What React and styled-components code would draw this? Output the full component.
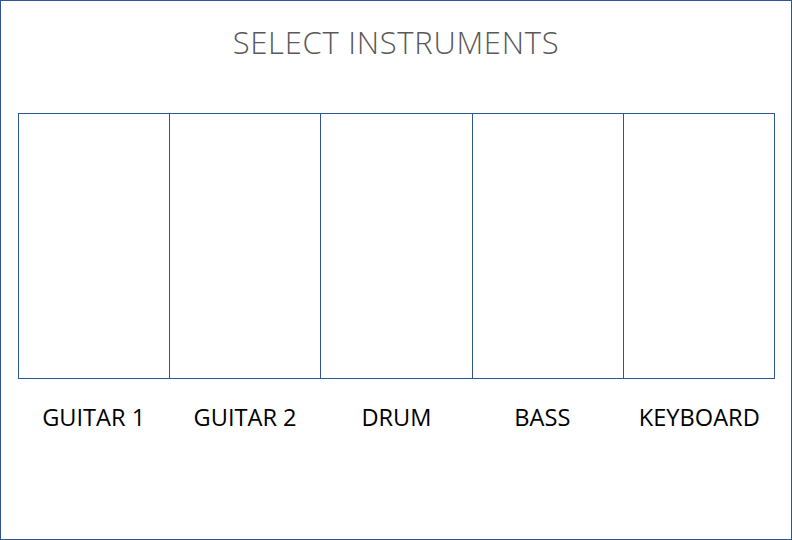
import React from "react";
import styled, { createGlobalStyle } from "styled-components";

const Global = createGlobalStyle`
  html, body { margin: 0; padding: 0; background: #fff; }
  body { font-family: "Open Sans", "Noto Sans", sans-serif; }
`;

const Frame = styled.div`
  box-sizing: border-box;
  width: 792px;
  height: 540px;
  border: 1px solid #2f5597;
  display: flex;
  flex-direction: column;
  align-items: flex-start;
  padding: 0 17px;
`;

const Title = styled.h1`
  align-self: stretch;
  text-align: center;
  margin: 20px 0 0 0;
  font-family: "Open Sans", sans-serif;
  font-weight: 300;
  font-size: 31px;
  line-height: 42px;
  color: #595959;
  letter-spacing: 0.7px;
`;

const Grid = styled.div`
  box-sizing: border-box;
  margin-top: 50px;
  width: 757px;
  border-left: 1px solid #2f5597;
  display: grid;
  grid-template-columns: repeat(5, 1fr);
`;

const Cell = styled.div`
  box-sizing: border-box;
  height: 266px;
  border: 1px solid #2f5597;
  border-left: none;
`;

const Labels = styled.div`
  width: 757px;
  display: grid;
  grid-template-columns: repeat(5, 1fr);
  margin-top: 22px;
`;

const Label = styled.div`
  text-align: center;
  font-family: "Open Sans", sans-serif;
  font-size: 23.6px;
  line-height: 32px;
  color: #000;
  padding-right: ${(p) => p.$offset || 0}px;
`;

const items = [
  { name: "GUITAR 1" },
  { name: "GUITAR 2" },
  { name: "DRUM" },
  { name: "BASS", offset: 11 },
  { name: "KEYBOARD" },
];

export default function App() {
  return (
    <>
      <Global />
      <Frame>
        <Title>SELECT INSTRUMENTS</Title>
        <Grid>
          {items.map((it) => (
            <Cell key={it.name} />
          ))}
        </Grid>
        <Labels>
          {items.map((it) => (
            <Label key={it.name} $offset={it.offset}>
              {it.name}
            </Label>
          ))}
        </Labels>
      </Frame>
    </>
  );
}
